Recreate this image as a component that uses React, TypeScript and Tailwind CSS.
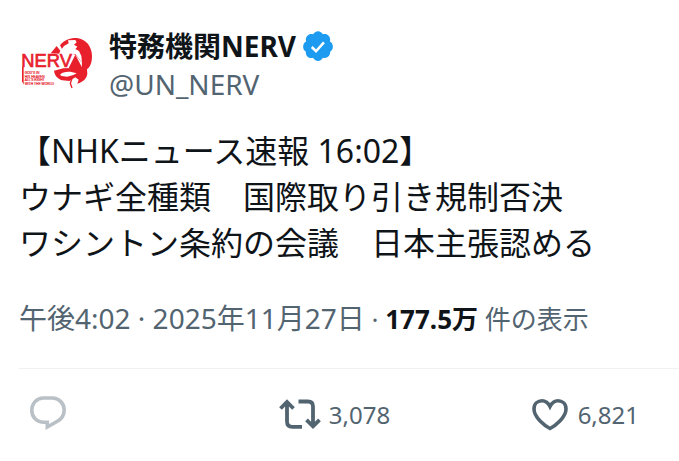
import type { ReactNode } from "react";

function NervLogo() {
  return (
    <svg viewBox="15 15 228 174" className="h-[58px] w-[76px] shrink-0" role="img" aria-label="NERV">
      <g fill="#e8202c">
        <path d="M138 52 C150 36 170 29 189 30 C216 33 234 56 234 84 C234 104 229 117 219 124 L220 137 C218 152 208 161 190 167 L194 155 L184 148 L166 159 L145 157 C130 152 122 142 120 128 L148 121 L203 119 L204 104 L184 80 L150 74 Z" />
        <path d="M110 76 L128 54 L139 68 L135 77 Z" />
        <path d="M174 151 L169 166 L174 180" fill="none" stroke="#e8202c" strokeWidth="4" />
      </g>
      <path d="M143 64 L150 54 L164 46 L162 37 L184 36 L188 43 L180 50 L190 56 L184 63 L195 69 L202 84 L204 104 L184 78 L172 82 L152 82 L144 74 Z" fill="#fff" />
      <path d="M138 140 C148 129 170 129 188 136 L178 141 L160 146 L143 144 Z" fill="#fff" />
      <path d="M164 120 L184 80 L205 120 Z" fill="#e8202c" />
      <text x="22" y="117" fill="#e8202c" stroke="#e8202c" strokeWidth="2" className="font-['Liberation_Sans',sans-serif] text-[55px]">NERV</text>
      <g fill="#e8202c" stroke="#e8202c" strokeWidth="0.5" className="font-['Liberation_Sans',sans-serif] text-[10px]">
        <text x="32" y="138">GOD’S IN</text>
        <text x="32" y="149">HIS HEAVEN</text>
        <text x="32" y="160">ALL’S RIGHT</text>
        <text x="32" y="171">WITH THE WORLD</text>
      </g>
      <path d="M24 117 H29 V170 L24 160 Z" fill="#e8202c" />
    </svg>
  );
}

function VerifiedBadge() {
  return (
    <svg viewBox="0 0 24 24" className="size-[34px] shrink-0" role="img" aria-label="認証済み">
      <path
        fill="#1d9bf0"
        d="M22.5 12.5c0-1.58-.875-2.95-2.148-3.6.154-.435.238-.905.238-1.4 0-2.21-1.71-3.998-3.818-3.998-.47 0-.92.084-1.336.25C14.818 2.415 13.51 1.5 12 1.5s-2.816.917-3.437 2.25c-.415-.165-.866-.25-1.336-.25-2.11 0-3.818 1.79-3.818 4 0 .494.083.964.237 1.4-1.272.65-2.147 2.018-2.147 3.6 0 1.495.782 2.798 1.942 3.486-.02.17-.032.34-.032.514 0 2.21 1.708 4 3.818 4 .47 0 .92-.086 1.335-.25.62 1.334 1.926 2.25 3.437 2.25 1.512 0 2.818-.916 3.437-2.25.415.163.865.248 1.336.248 2.11 0 3.818-1.79 3.818-4 0-.174-.012-.344-.033-.513 1.158-.687 1.943-1.99 1.943-3.484z"
      />
      <path d="M7.6 12.7l3 3 5.6-6.2" fill="none" stroke="#fff" strokeWidth="1.8" />
    </svg>
  );
}

function ReplyIcon() {
  return (
    <svg viewBox="0 0 40 40" className="size-10" fill="none" stroke="#b9c1c7" strokeWidth="3.6" aria-hidden="true">
      <path d="M15.5 5H24.500C30.500 5 36.200 10 36.200 17C36.200 22 33.500 26 29 28.500L19.300 34V29.300H16C8.500 29.300 3.800 24 3.800 17.500C3.800 10 9 5 15.500 5Z" />
    </svg>
  );
}

function RepostIcon() {
  return (
    <svg viewBox="0 0 42 40" className="h-10 w-[42px]" fill="none" stroke="#536471" strokeWidth="3.8" aria-hidden="true">
      <path d="M1.500 15.500L8 9L14.500 15.500M8 9.500V28.500Q8 33.800 13.300 33.800H23M19.500 8.500H29Q34 8.500 34 13.500V33M27.500 26.800L34 33.300L40.500 26.800" />
    </svg>
  );
}

function LikeIcon() {
  return (
    <svg viewBox="0 0 40 40" className="size-10" fill="none" stroke="#536471" strokeWidth="3.6" aria-hidden="true">
      <path d="M20 35.500C15 33 4 24.500 4 16C4 10.500 8 7.800 12 7.800C16 7.800 18.500 10.500 20 13.500C21.500 10.500 24 7.800 28 7.800C32 7.800 36 10.500 36 16C36 24.500 25 33 20 35.500Z" />
    </svg>
  );
}

function Action({ label, count, children }: { label: string; count?: string; children: ReactNode }) {
  return (
    <button type="button" aria-label={count ? `${label} ${count}` : label} className="flex items-center gap-2">
      {children}
      {count && <span className="pt-1 text-2xl leading-8">{count}</span>}
    </button>
  );
}

export default function App() {
  return (
    <article lang="ja" className="bg-white pt-6 pl-[19px] font-['Noto_Sans','Noto_Sans_CJK_JP',sans-serif] text-[#536471]">
      <header className="flex items-center gap-[14px]">
        <NervLogo />
        <div>
          <div className="flex items-center gap-[5px]">
            <a href="#profile" className="text-[28px] leading-[44px] font-bold text-[#0f1419]">特務機関NERV</a>
            <VerifiedBadge />
          </div>
          <a href="#profile" className="block text-[28px] leading-8">@UN_NERV</a>
        </div>
      </header>
      <p className="mt-7 text-[32px] leading-[46px] text-[#0f1419]">
        【NHKニュース速報 16:02】
        <br />
        ウナギ全種類　国際取り引き規制否決
        <br />
        ワシントン条約の会議　日本主張認める
      </p>
      <div className="mt-8 pb-[25px] leading-10">
        <time dateTime="2025-11-27T16:02" className="text-[28px]">午後4:02 · 2025年11月27日</time>
        <span className="text-[26px]"> · <strong className="font-bold text-[#0f1419]">177.5万</strong> 件の表示</span>
      </div>
      <div className="grid grid-cols-[1fr_1fr_auto] border-t border-[#eff1f2] pt-6 pr-10 pl-[9px]">
        <Action label="返信">
          <ReplyIcon />
        </Action>
        <Action label="リポスト" count="3,078">
          <RepostIcon />
        </Action>
        <Action label="いいね" count="6,821">
          <LikeIcon />
        </Action>
      </div>
    </article>
  );
}
